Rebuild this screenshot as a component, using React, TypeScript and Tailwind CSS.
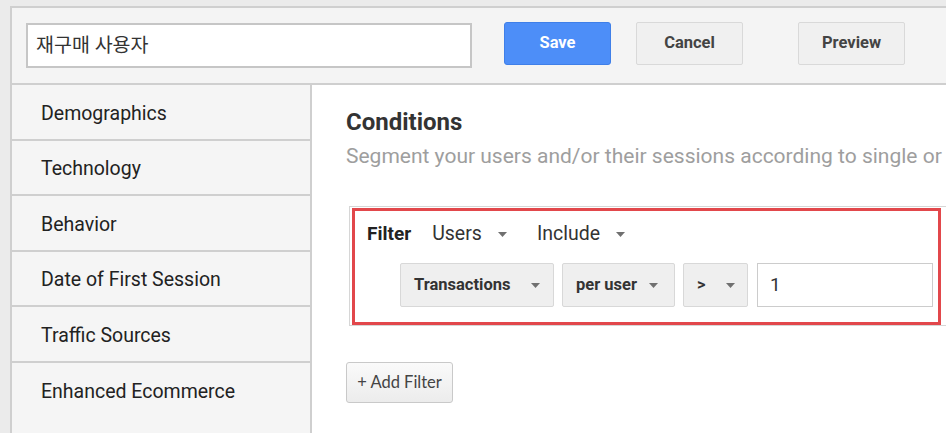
import React from "react";

const SIDEBAR = [
  "Demographics",
  "Technology",
  "Behavior",
  "Date of First Session",
  "Traffic Sources",
  "Enhanced Ecommerce",
];

function Caret({ className = "" }: { className?: string }) {
  return (
    <svg width="9" height="5" viewBox="0 0 9 5" className={className}>
      <path d="M0 0h9L4.5 5z" fill="#707070" />
    </svg>
  );
}

function Select({ label, width, caretGap }: { label: string; width: number; caretGap: string }) {
  return (
    <div
      className="flex h-[44px] items-center rounded-[2px] border border-[#d8d8d8] bg-[#efefef] pl-[13px] text-[16.5px] font-bold text-[#333]"
      style={{ width }}
    >
      <span>{label}</span>
      <Caret className={caretGap} />
    </div>
  );
}

export default function App() {
  return (
    <div
      className="h-[433px] w-[946px] overflow-hidden bg-[#ebebeb] pl-[10px] pt-[6px]"
      style={{ fontFamily: "Roboto, 'Noto Sans CJK KR', sans-serif" }}
    >
      <div className="flex h-full flex-col border-l-2 border-t-2 border-[#cfcfcf]">
        {/* header */}
        <div className="flex h-[77px] shrink-0 items-start border-b-2 border-[#cfcfcf] bg-[#f4f4f4] pl-[14px] pt-[14px]">
          <div className="mt-[1px] flex h-[45px] w-[446px] items-center border-2 border-[#c6c6c6] bg-white pl-[8px] text-[19.5px] text-[#333]">
            재구매 사용자
          </div>
          <button className="ml-[32px] h-[43px] w-[107px] rounded-[3px] border border-[#3f7fe8] bg-[#4d8ef8] text-[16.5px] font-bold text-white">
            Save
          </button>
          <button className="ml-[25px] h-[43px] w-[107px] rounded-[2px] border border-[#d9d9d9] bg-[#f0f0f0] text-[16.5px] font-bold text-[#444]">
            Cancel
          </button>
          <button className="ml-[55px] h-[43px] w-[107px] rounded-[2px] border border-[#d9d9d9] bg-[#f0f0f0] text-[16.5px] font-bold text-[#444]">
            Preview
          </button>
        </div>

        <div className="flex flex-1">
          {/* sidebar */}
          <div className="w-[300px] shrink-0 border-r-2 border-[#cfcfcf] bg-[#f5f5f5]">
            {SIDEBAR.map((s) => (
              <div
                key={s}
                className="flex h-[55.5px] items-center border-b-2 border-[#cfcfcf] pl-[29px] pt-[3px] text-[19.5px] text-[#222] last:border-b-0"
              >
                {s}
              </div>
            ))}
          </div>

          {/* main */}
          <div className="min-w-0 flex-1 overflow-hidden bg-white pl-[34px] pt-[22px]">
            <div className="text-[24px] font-bold leading-[30px] text-[#333]">Conditions</div>
            <div className="mt-[6px] whitespace-nowrap text-[21px] leading-[26px] text-[#9e9e9e]">
              Segment your users and/or their sessions according to single or multi-session conditions.
            </div>

            <div className="ml-[3px] mt-[37px] w-[620px] border-y border-l border-[#d6d6d6] pt-[1px]">
              <div className="ml-[2px] h-[117px] w-[589px] border-[3px] border-[#e2474b] pl-[12px] pt-[8px]">
                <div className="flex h-[30px] items-center text-[19.5px] text-[#333]">
                  <span className="text-[19px] font-bold text-[#222]">Filter</span>
                  <span className="ml-[21px]">Users</span>
                  <Caret className="ml-[16px]" />
                  <span className="ml-[30px]">Include</span>
                  <Caret className="ml-[16px]" />
                </div>
                <div className="ml-[33px] mt-[14px] flex gap-[8px]">
                  <Select label="Transactions" width={154} caretGap="ml-[21px]" />
                  <Select label="per user" width={113} caretGap="ml-[12px]" />
                  <div className="flex h-[44px] w-[65px] items-center rounded-[2px] border border-[#d8d8d8] bg-[#efefef] pl-[13px] text-[16.5px] font-bold text-[#333]">
                    <span>&gt;</span>
                    <Caret className="ml-[20px]" />
                  </div>
                  <div className="ml-[1px] flex h-[44px] w-[176px] items-center border border-[#cccccc] bg-white pl-[12px] text-[19px] text-[#333]">
                    1
                  </div>
                </div>
              </div>
            </div>

            <button
              className="mt-[36px] h-[41px] w-[107px] rounded-[3px] border border-[#c9c9c9] bg-gradient-to-b from-[#fafafa] to-[#ececec] text-[16.5px] text-[#444]"
              style={{ fontFamily: "Lato, sans-serif" }}
            >
              + Add Filter
            </button>
          </div>
        </div>
      </div>
    </div>
  );
}
